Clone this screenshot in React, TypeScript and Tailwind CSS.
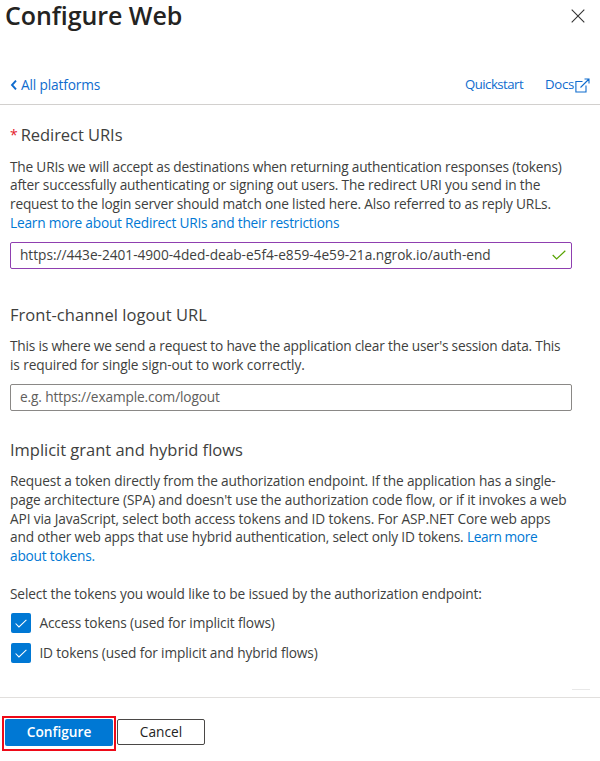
import type { ReactNode } from 'react';

function Line({ children, className = '' }: { children: ReactNode; className?: string }) {
  return <span className={`block whitespace-nowrap ${className}`}>{children}</span>;
}

function Check({ className = '' }: { className?: string }) {
  return (
    <svg viewBox="0 0 14 10" className={className} fill="none" stroke="currentColor" strokeWidth="1.2">
      <path d="M0.7 5 L4.6 9 L13.3 0.8" />
    </svg>
  );
}

function Option({ children }: { children: ReactNode }) {
  return (
    <label className="flex h-5 items-center">
      <span className="ml-[1.4px] flex h-5 w-5 shrink-0 items-center justify-center rounded-[2px] bg-[#0078d4] text-white">
        <Check className="h-[9px] w-3" />
      </span>
      <span className="ml-2 whitespace-nowrap tracking-[-0.13px]">{children}</span>
    </label>
  );
}

export default function App() {
  return (
    <div className="flex h-[761px] w-[600px] flex-col bg-white font-['Open_Sans','Noto_Sans',sans-serif] text-[13.7px] leading-[18.7px] text-[#403f3e]">
      <header className="flex h-[105px] shrink-0 flex-col border-b border-[#d2d0ce]">
        <div className="flex h-[31px] items-center justify-between pl-[5px] pr-[15px]">
          <h1 className="text-[25px] font-semibold leading-[31px] tracking-[-0.06px] text-[#242322]">Configure Web</h1>
          <svg viewBox="0 0 14 14" className="h-[14px] w-[14px]" fill="none" stroke="#333" strokeWidth="1.1">
            <path d="M0.7 0.7 L13.3 13.3 M13.3 0.7 L0.7 13.3" />
          </svg>
        </div>
        <nav className="mt-[44px] flex h-5 items-center pl-[10px] pr-[10px] text-[#0f6cce]">
          <svg viewBox="0 0 7 10" className="h-[10px] w-[7px]" fill="none" stroke="currentColor" strokeWidth="1.9">
            <path d="M6 0.6 L2 5 L6 9.4" />
          </svg>
          <a className="ml-1 tracking-[-0.14px]">All platforms</a>
          <a className="ml-auto mt-[-2px] text-[13.2px] tracking-[-0.52px]">Quickstart</a>
          <a className="ml-[22px] mt-[-2px] text-[13.2px] tracking-[-0.3px]">Docs</a>
          <svg viewBox="0 0 15 15" className="ml-px h-[15px] w-[15px]" fill="none" stroke="currentColor" strokeWidth="1.1">
            <path d="M7.5 3.5 H0.9 V14 H11 V7.5 M5.5 9.5 L14 1 M9.5 1 H14 V5.5" />
          </svg>
        </nav>
      </header>

      <main className="flex h-[593px] shrink-0 flex-col border-b border-[#e1dfdd] px-[10px]">
        <h2 className="mt-[18px] flex h-[24px] items-center text-[16.5px] tracking-[-0.05px]">
          <span className="mr-[3px] text-[14px] text-[#e3212b]">*</span>Redirect URIs
        </h2>
        <p className="mt-[10.5px]">
          <Line className="tracking-[-0.2px]">The URIs we will accept as destinations when returning authentication responses (tokens)</Line>
          <Line className="tracking-[-0.177px]">after successfully authenticating or signing out users. The redirect URI you send in the</Line>
          <Line className="tracking-[-0.183px]">request to the login server should match one listed here. Also referred to as reply URLs.</Line>
          <Line className="tracking-[-0.215px] text-[#0078d4]">Learn more about Redirect URIs and their restrictions</Line>
        </p>
        <div className="mt-[9.5px] flex h-[27px] w-[562px] shrink-0 items-center rounded-[2px] border border-[#8f3fb0] pl-[9px] pr-[5px]">
          <span className="whitespace-nowrap tracking-[-0.025px]">https://443e-2401-4900-4ded-deab-e5f4-e859-4e59-21a.ngrok.io/auth-end</span>
          <Check className="ml-auto h-[10px] w-[14px] text-[#57a300]" />
        </div>

        <h2 className="mt-[35px] flex h-[24px] items-center text-[16.5px] tracking-[0.05px]">Front-channel logout URL</h2>
        <p className="mt-[9.5px]">
          <Line className="tracking-[-0.2px]">This is where we send a request to have the application clear the user's session data. This</Line>
          <Line className="tracking-[-0.125px]">is required for single sign-out to work correctly.</Line>
        </p>
        <div className="mt-[9.5px] flex h-[27px] w-[562px] shrink-0 items-center rounded-[2px] border border-[#8a8886] pl-[9px] text-[#605e5c]">
          <span className="whitespace-nowrap tracking-[-0.13px]">e.g. https://example.com/logout</span>
        </div>

        <h2 className="mt-[27px] flex h-[24px] items-center text-[16.5px] tracking-[-0.02px]">Implicit grant and hybrid flows</h2>
        <p className="mt-[10px]">
          <Line className="tracking-[-0.152px]">Request a token directly from the authorization endpoint. If the application has a single-</Line>
          <Line className="tracking-[-0.135px]">page architecture (SPA) and doesn't use the authorization code flow, or if it invokes a web</Line>
          <Line className="tracking-[-0.13px]">API via JavaScript, select both access tokens and ID tokens. For ASP.NET Core web apps</Line>
          <Line className="tracking-[-0.165px]">and other web apps that use hybrid authentication, select only ID tokens. <span className="tracking-[-0.39px] text-[#0078d4]">Learn more</span></Line>
          <Line className="tracking-[-0.2px] text-[#0078d4]">about tokens.</Line>
        </p>
        <p className="mt-[19px]">
          <Line className="tracking-[-0.133px]">Select the tokens you would like to be issued by the authorization endpoint:</Line>
        </p>
        <div className="mt-[10px] flex flex-col gap-[10px]">
          <Option>Access tokens (used for implicit flows)</Option>
          <Option>ID tokens (used for implicit and hybrid flows)</Option>
        </div>
        <div className="mt-auto mb-[7px] h-px w-[18px] self-end bg-[#e8e8e8]" />
      </main>

      <footer className="flex items-start pl-[2px] pt-[17.5px]">
        <div className="flex h-[35px] w-[114px] border-2 border-[#ee0a18] px-px pt-[1.5px]">
          <button className="h-[27px] w-[108px] rounded-[2px] bg-[#0078d4] font-semibold text-white">Configure</button>
        </div>
        <button className="ml-px mt-[3.5px] h-[26px] w-[88px] rounded-[2px] border border-[#4a4846] text-[#242322]">Cancel</button>
      </footer>
    </div>
  );
}
